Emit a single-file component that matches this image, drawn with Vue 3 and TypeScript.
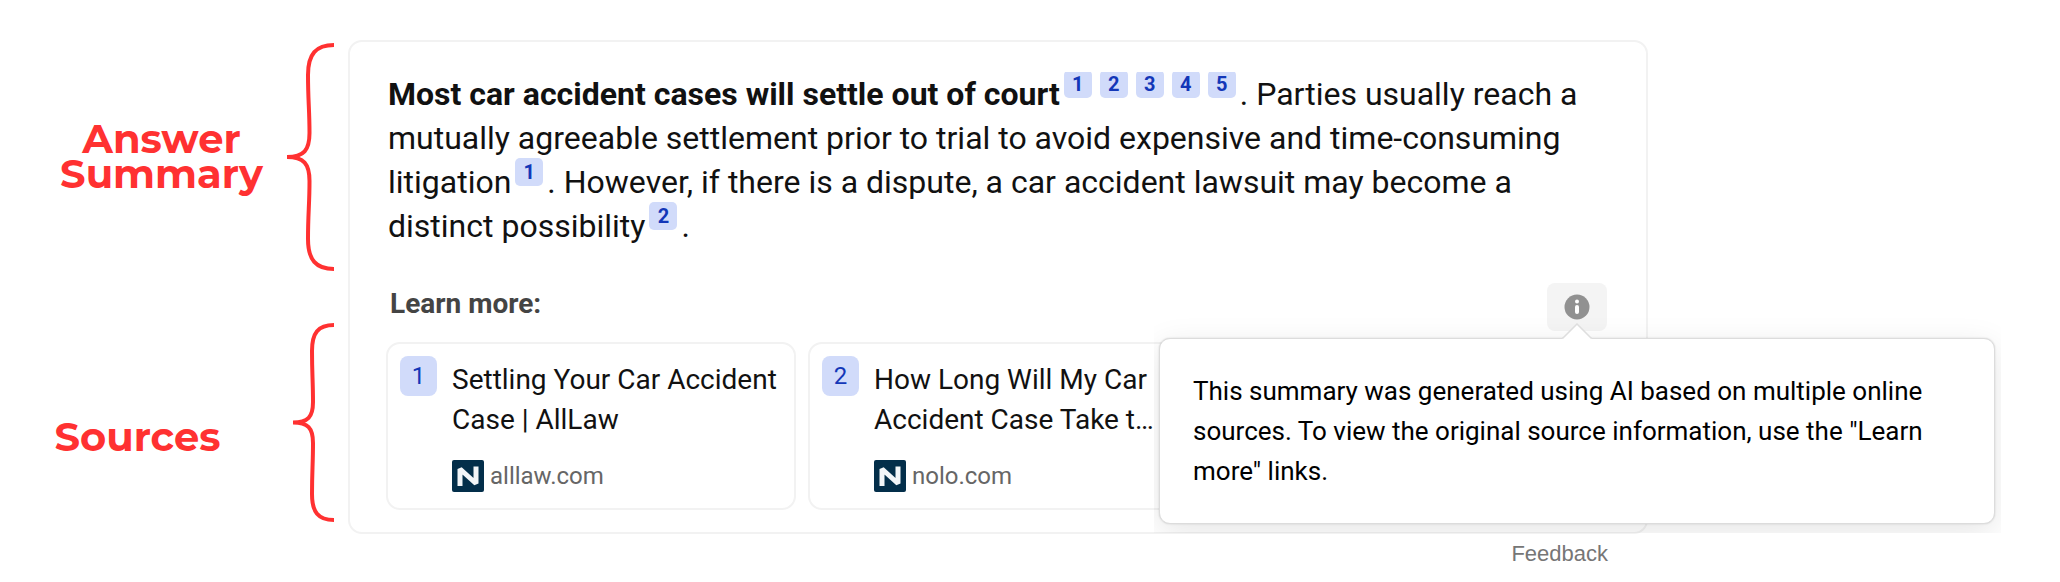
<script setup lang="ts">
interface Source {
  id: number
  title: string
  domain: string
}

const leadCitations: number[] = [1, 2, 3, 4, 5]

const sources: Source[] = [
  { id: 1, title: 'Settling Your Car Accident Case | AllLaw', domain: 'alllaw.com' },
  { id: 2, title: 'How Long Will My Car Accident Case Take t…', domain: 'nolo.com' },
]
</script>

<template>
  <main class="page">
    <aside class="notes">
      <div class="note note-summary">
        <h2 class="note-label">Answer<br />Summary</h2>
        <svg class="brace" width="47" height="228" viewBox="0 0 47 228" aria-hidden="true">
          <path d="M47 2C29 2 21 11 21 32C21 58 22.5 66 22.5 90C22.5 107 17 114 0 114C17 114 22.5 121 22.5 138C22.5 162 21 170 21 196C21 217 29 226 47 226" />
        </svg>
      </div>
      <div class="note note-sources">
        <h2 class="note-label">Sources</h2>
        <svg class="brace" width="41" height="199" viewBox="0 0 41 199" aria-hidden="true">
          <path d="M41 2C25 2 19 10 19 28C19 51 20 58 20 79C20 94 15 99.500 0 99.500C15 99.500 20 105 20 120C20 141 19 148 19 171C19 189 25 197 41 197" />
        </svg>
      </div>
    </aside>

    <div class="content">
      <article class="answer">
        <p class="summary">
          <strong>Most car accident cases will settle out of court</strong><a v-for="n in leadCitations" :key="n" class="cite" :href="'#source-' + n">{{ n }}</a>. Parties usually reach a mutually agreeable settlement prior to trial to avoid expensive and time-consuming litigation<a class="cite" href="#source-1">1</a>. However, if there is a dispute, a car accident lawsuit may become a distinct possibility<a class="cite" href="#source-2">2</a>.
        </p>

        <header class="learn">
          <h3 class="learn-title">Learn more:</h3>
          <div class="info">
            <button class="info-button" type="button" aria-label="About this summary" aria-describedby="info-tip">
              <svg width="26" height="26" viewBox="0 0 26 26" aria-hidden="true">
                <circle cx="13" cy="13" r="12.500" fill="#919191" />
                <circle cx="13" cy="7.500" r="2" fill="#fff" />
                <rect x="11" y="11" width="4" height="9" rx="2" fill="#fff" />
              </svg>
            </button>
            <div id="info-tip" class="tip" role="tooltip">
              <svg class="tip-arrow" width="30" height="16" viewBox="0 0 30 16" aria-hidden="true">
                <path d="M0 16L1 15L15 1L29 15L30 16Z" fill="#fff" />
                <path d="M0 15H1L15 1L29 15H30" fill="none" stroke="#dedede" stroke-width="1.500" />
              </svg>
              This summary was generated using AI based on multiple online sources. To view the original source information, use the "Learn more" links.
            </div>
          </div>
        </header>

        <div class="sources">
          <a v-for="s in sources" :id="'source-' + s.id" :key="s.id" class="source" :href="'https://' + s.domain">
            <span class="source-number">{{ s.id }}</span>
            <span class="source-body">
              <span class="source-title">{{ s.title }}</span>
              <span class="source-site">
                <svg width="32" height="32" viewBox="0 0 32 32" aria-hidden="true">
                  <rect width="32" height="32" rx="2" fill="#032e4a" />
                  <path d="M8 26V9L24 23.500V6.500" fill="none" stroke="#f2f5f8" stroke-width="5" stroke-linejoin="bevel" />
                </svg>
                {{ s.domain }}
              </span>
            </span>
          </a>
        </div>
      </article>
      <button class="feedback" type="button">Feedback</button>
    </div>
  </main>
</template>

<style>
body {
  margin: 0;
  background: #fff;
}
</style>

<style scoped>
.page {
  display: grid;
  grid-template-columns: 348px minmax(0, 1fr) 412px;
  box-sizing: border-box;
  padding-top: 40px;
  overflow: hidden;
  font-family: Roboto, "Liberation Sans", sans-serif;
  color: #111;
}

.notes {
  display: flex;
  flex-direction: column;
  gap: 52px;
  padding: 3px 14px 0 0;
}

.note {
  display: flex;
  justify-content: flex-end;
  align-items: center;
}

.note-label {
  flex: 1;
  margin: 0;
  font: 700 40px/35px Montserrat, Inter, sans-serif;
  color: #ff3131;
  text-align: center;
}

.note-summary .note-label {
  padding: 0 0 2px 36px;
}

.note-sources .note-label {
  padding: 28px 18px 0 0;
}

.brace {
  flex: none;
  fill: none;
  stroke: #ff3131;
  stroke-width: 4;
}

.content {
  display: flex;
  flex-direction: column;
  align-items: stretch;
}

.answer {
  padding: 30px 39px 22px 36px;
  border: 2px solid #f2f2f2;
  border-radius: 14px;
}

.summary {
  margin: 0;
  padding-left: 2px;
  overflow: hidden;
  font-size: 32px;
  line-height: 44px;
}

.cite {
  display: inline-block;
  width: 28px;
  height: 28px;
  margin: -4px 4px;
  border-radius: 5px;
  background: #d1dbfa;
  color: #1337b8;
  font-size: 20px;
  font-weight: 700;
  line-height: 28px;
  text-align: center;
  text-decoration: none;
  vertical-align: 14px;
}

.learn {
  display: flex;
  justify-content: space-between;
  align-items: flex-start;
  margin-top: 35px;
}

.learn-title {
  margin: 0 0 0 4px;
  font-size: 28px;
  font-weight: 700;
  line-height: 42px;
  color: #444;
}

.info {
  position: relative;
}

.info-button {
  display: flex;
  align-items: center;
  justify-content: center;
  width: 60px;
  height: 48px;
  padding: 0;
  border: 0;
  border-radius: 8px;
  background: #f4f4f4;
}

.tip {
  position: absolute;
  z-index: 1;
  top: 55px;
  right: -388px;
  box-sizing: border-box;
  width: 836px;
  padding: 32px 60px 32px 33px;
  border: 1px solid #dcdcdc;
  border-radius: 11px;
  background: #fff;
  box-shadow: 0 0 2px rgba(0, 0, 0, 0.15), 0 8px 32px rgba(0, 0, 0, 0.1);
  clip-path: inset(-40px -6px -9px -5px);
  font-size: 26px;
  line-height: 40px;
  color: #000;
}

.tip-arrow {
  position: absolute;
  top: -16px;
  right: 402px;
}

.sources {
  display: flex;
  gap: 12px;
  margin-top: 11px;
}

.source {
  display: flex;
  gap: 15px;
  box-sizing: border-box;
  flex: 0 0 410px;
  padding: 12px 12px 16px;
  border: 2px solid #f2f2f2;
  border-radius: 14px;
  color: #111;
  text-decoration: none;
}

.source-number {
  flex: none;
  width: 37px;
  height: 40px;
  border-radius: 8px;
  background: #d1dbfa;
  color: #1337b8;
  font-size: 24px;
  line-height: 40px;
  text-align: center;
}

.source-body {
  display: flex;
  flex-direction: column;
  gap: 20px;
  min-width: 0;
  padding-top: 4px;
}

.source-title {
  font-size: 28px;
  line-height: 40px;
}

.source-site {
  display: flex;
  align-items: center;
  gap: 6px;
  font-size: 24px;
  line-height: 32px;
  color: #666;
}

.feedback {
  align-self: flex-end;
  margin: 6px 40px 0 0;
  padding: 0;
  border: 0;
  background: none;
  color: #767676;
  font: 22px/28px "Liberation Sans", Arial, sans-serif;
}
</style>
